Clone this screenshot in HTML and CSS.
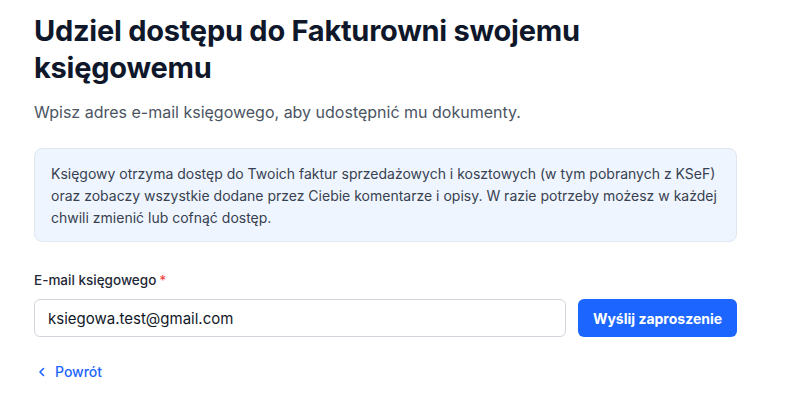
FILE: index.html
```html
<!DOCTYPE html>
<html lang="pl">
<head>
<meta charset="utf-8">
<link rel="stylesheet" href="styles.css">
</head>
<body>
<main class="page">
  <h1 class="title">Udziel dostępu do Fakturowni swojemu księgowemu</h1>
  <p class="subtitle">Wpisz adres e-mail księgowego, aby udostępnić mu dokumenty.</p>
  <div class="info">
    Księgowy otrzyma dostęp do Twoich faktur sprzedażowych i kosztowych (w tym pobranych z KSeF) oraz zobaczy wszystkie dodane przez Ciebie komentarze i opisy. W razie potrzeby możesz w każdej chwili zmienić lub cofnąć dostęp.
  </div>
  <form class="form">
    <label class="label" for="email">E-mail księgowego<span class="req">*</span></label>
    <div class="row">
      <input class="input" id="email" type="text" value="ksiegowa.test@gmail.com">
      <button class="btn" type="button">Wyślij zaproszenie</button>
    </div>
  </form>
  <a class="back" href="#">
    <svg width="12" height="12" viewBox="0 0 12 12" fill="none" stroke="currentColor" stroke-width="1.6" stroke-linecap="round" stroke-linejoin="round"><path d="M7.5 2.5 4 6l3.5 3.5"/></svg>
    <span>Powrót</span>
  </a>
</main>
</body>
</html>
```
FILE: styles.css
```css
* { box-sizing: border-box; }
html, body { margin: 0; padding: 0; background: #fff; }
body { font-family: Inter, "Noto Sans", sans-serif; color: #111827; }
.page { width: 703px; margin-left: 34px; padding-top: 12px; }
.title {
  margin: 0;
  font-size: 29px;
  line-height: 37px;
  font-weight: 700;
  letter-spacing: -0.25px;
  color: #0f172a;
  max-width: 600px;
}
.subtitle {
  margin: 14px 0 0;
  font-size: 16px;
  line-height: 24px;
  color: #4b5563;
}
.info {
  margin-top: 24px;
  background: #eff5fe;
  border: 1px solid #e1e7ef;
  border-radius: 8px;
  padding: 14px 16px 12px;
  font-size: 14px;
  line-height: 22px;
  color: #374151;
}
.form { margin-top: 28px; display: flex; flex-direction: column; }
.label { font-size: 13.5px; font-weight: 500; line-height: 20px; color: #1f2937; }
.req { color: #ef4444; margin-left: 3px; }
.row { display: flex; gap: 12px; margin-top: 9px; }
.input {
  flex: 1;
  height: 38px;
  border: 1px solid #d1d5db;
  border-radius: 6px;
  padding: 0 13px;
  font-family: inherit;
  font-size: 15px;
  color: #111827;
  outline: none;
}
.btn {
  width: 159px;
  height: 38px;
  border: none;
  border-radius: 6px;
  background: #1c66ff;
  color: #fff;
  font-family: inherit;
  font-size: 14px;
  font-weight: 700;
}
.back {
  display: inline-flex;
  align-items: center;
  gap: 7px;
  margin-top: 26px;
  margin-left: 2px;
  color: #1c66ff;
  text-decoration: none;
  font-size: 14px;
  font-weight: 500;
}
```
